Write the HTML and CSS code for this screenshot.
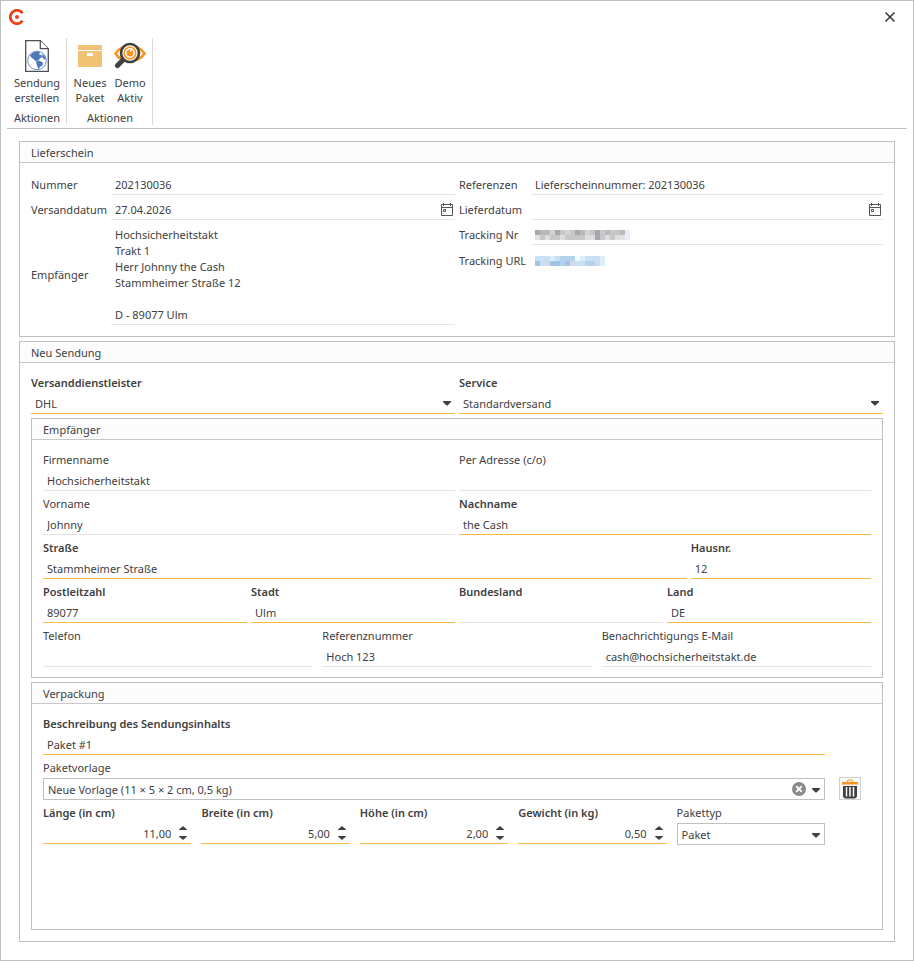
FILE: index.html
```html
<!DOCTYPE html>
<html lang="de">
<head>
<meta charset="utf-8">
<meta name="viewport" content="width=device-width, initial-scale=1">
<title>Sendung erstellen</title>
<link rel="stylesheet" href="styles.css">
</head>
<body>
<svg class="defs" aria-hidden="true">
  <symbol id="caret" viewBox="0 0 8 5"><path d="M0 0h8v1L4.500 4.500h-1L0 1z" fill="#404040"/></symbol>
  <symbol id="calendar" viewBox="0 0 12 13"><path d="M.5 1.500h11v11H.5zM.5 4.500h11M2.500 0v3M9.500 0v3M2.500 6.500h2v2h-2z" fill="none" stroke="#555"/></symbol>
  <symbol id="spin" viewBox="0 0 8 4"><path d="M4 0l4 3.500V4H0v-.5z" fill="#404040"/></symbol>
</svg>
<div class="window">
  <header class="titlebar">
    <svg class="logo" viewBox="0 0 16 16" role="img" aria-label="Logo">
      <path d="M13.500 4.200A6.700 6.700 0 1 0 13.500 11.800" fill="none" stroke="#e8431a" stroke-width="2.800"/>
      <circle cx="8" cy="8" r="2" fill="#e8431a"/>
    </svg>
    <button class="close" type="button" aria-label="Schließen">
      <svg viewBox="0 0 10 10"><path d="M.5.5l9 9M9.500.5l-9 9" stroke="#333" stroke-width="1.500"/></svg>
    </button>
  </header>

  <nav class="ribbon">
    <div class="group">
      <div class="tools">
        <button class="tool" type="button">
          <svg viewBox="0 0 32 32">
            <path d="M4.700.7h14.600l8 8v22.600H4.700z" fill="#fff" stroke="#505050" stroke-width="1.300"/>
            <path d="M19.300.7v8h8" fill="#fff" stroke="#505050" stroke-width="1.300"/>
            <circle cx="16" cy="20.500" r="9.300" fill="#fff" stroke="#6f8fc5"/>
            <path d="M9 15.500l3-3 5-1 2 1-1 2 2.500.5.500 2.500-2 .5-1 2-1.500.5-.5 1.500-2-1.500-1.500-1.500-1-.5-2-2z" fill="#4f78b8"/>
            <path d="M15 22l3-1.500 4 2-.5 3-2.500 1.500-1.500 2.500-1.500-4z" fill="#4f78b8"/>
            <path d="M21.500 14l2.500 3 .7 3-2.200-1-1.500-2.500z" fill="#4f78b8"/>
          </svg>
          <span>Sendung<br>erstellen</span>
        </button>
      </div>
      <div class="caption">Aktionen</div>
    </div>
    <div class="group">
      <div class="tools">
        <button class="tool" type="button">
          <svg viewBox="0 0 32 32"><path d="M4 5h24v5H4z" fill="#efc373"/><path d="M4 11h24v16H4zM13 13v3h6v-3z" fill="#efc373" fill-rule="evenodd"/></svg>
          <span>Neues<br>Paket</span>
        </button>
        <button class="tool" type="button">
          <svg viewBox="0 0 32 32">
            <path d="M1.500 13.500C8 3.500 24 3.500 30.500 13.500C24 23.500 8 23.500 1.500 13.500z" fill="#fff" stroke="#f7931e" stroke-width="2.600"/>
            <path d="M9.500 19.500L3.500 25.500" stroke="#404040" stroke-width="5" stroke-linecap="round"/>
            <circle cx="16" cy="13" r="9" fill="#fff" stroke="#404040" stroke-width="2.700"/>
            <circle cx="16" cy="13" r="5.800" fill="none" stroke="#f7931e" stroke-width="1.600"/>
            <circle cx="16" cy="13" r="3.400" fill="#f7931e"/>
            <path d="M16 11.500l1.500-1.500" stroke="#fff" stroke-width="1.300"/>
          </svg>
          <span>Demo<br>Aktiv</span>
        </button>
      </div>
      <div class="caption">Aktionen</div>
    </div>
  </nav>

  <main class="content">
    <section class="panel">
      <h2>Lieferschein</h2>
      <div class="body pair">
        <div class="sheet">
          <label for="nummer">Nummer</label>
          <div class="box"><input id="nummer" value="202130036"></div>
          <label for="versand">Versanddatum</label>
          <div class="box"><input id="versand" value="27.04.2026"><button class="pick" type="button" aria-label="Kalender öffnen"><svg><use href="#calendar"/></svg></button></div>
          <label for="adresse">Empfänger</label>
          <div class="box"><textarea id="adresse" rows="6">Hochsicherheitstakt
Trakt 1
Herr Johnny the Cash
Stammheimer Straße 12

D - 89077 Ulm</textarea></div>
        </div>
        <div class="sheet narrow">
          <label for="ref">Referenzen</label>
          <div class="box"><input id="ref" value="Lieferscheinnummer: 202130036"></div>
          <label for="lieferdatum">Lieferdatum</label>
          <div class="box"><input id="lieferdatum"><button class="pick" type="button" aria-label="Kalender öffnen"><svg><use href="#calendar"/></svg></button></div>
          <span>Tracking Nr</span>
          <div class="box">
            <svg class="mosaic" viewBox="0 0 19 2" width="95" height="10" shape-rendering="crispEdges" role="img" aria-label="Unkenntlich gemacht">
              <path d="M0 0h19v2H0z" fill="#c8c6c8"/>
              <path d="M0 0h1v1H0zM4 0h1v1H4zM8 0h1v1H8zM12 0h1v2h-1z" fill="#a9a7ab"/>
              <path d="M1 0h2v1H1zM9 0h1v1H9zM14 0h1v1h-1zM17 0h1v1h-1z" fill="#bab8ba"/>
              <path d="M2 1h1v1H2zM5 1h1v1H5zM10 1h2v1h-2zM14 1h1v1h-1zM16 1h1v1h-1z" fill="#dedde0"/>
              <path d="M3 0h1v1H3zM6 0h1v1H6zM10 0h1v1h-1z" fill="#d6d2d2"/>
              <path d="M0 1h1v1H0zM17 1h1v1h-1z" fill="#e2e2e2"/>
              <path d="M18 0h1v2h-1z" fill="#e9eff6"/>
            </svg>
          </div>
          <span>Tracking URL</span>
          <div class="box plain">
            <a href="#" aria-label="Sendungsverfolgung">
              <svg class="mosaic" viewBox="0 0 14 2" width="70" height="10" shape-rendering="crispEdges">
                <path d="M0 0h14v2H0z" fill="#c9dff2"/>
                <path d="M0 1h1v1H0zM3 1h2v1H3zM6 1h1v1H6z" fill="#a0c5e4"/>
                <path d="M5 0h3v1H5zM5 1h1v1H5zM10 1h2v1h-2z" fill="#b3d2ec"/>
                <path d="M3 0h1v1H3zM9 0h1v1H9zM13 0h1v2h-1z" fill="#d9effc"/>
                <path d="M2 1h1v1H2zM7 1h1v1H7zM12 1h1v1h-1z" fill="#d2d9ea"/>
                <path d="M8 0h1v1H8z" fill="#f8fbff"/>
              </svg>
            </a>
          </div>
        </div>
      </div>
    </section>

    <section class="panel grow">
      <h2>Neu Sendung</h2>
      <div class="body stack">
        <div class="row two">
          <div class="field must"><label for="dienst">Versanddienstleister</label><div class="line"><select id="dienst"><option>DHL</option></select><svg class="caret"><use href="#caret"/></svg></div></div>
          <div class="field must"><label for="service">Service</label><div class="line"><select id="service"><option>Standardversand</option></select><svg class="caret"><use href="#caret"/></svg></div></div>
        </div>

        <section class="panel">
          <h2>Empfänger</h2>
          <div class="body rows">
            <div class="row two">
              <div class="field"><label for="firma">Firmenname</label><div class="line"><input id="firma" value="Hochsicherheitstakt"></div></div>
              <div class="field"><label for="co">Per Adresse (c/o)</label><div class="line"><input id="co"></div></div>
            </div>
            <div class="row two">
              <div class="field"><label for="vorname">Vorname</label><div class="line"><input id="vorname" value="Johnny"></div></div>
              <div class="field must"><label for="nachname">Nachname</label><div class="line"><input id="nachname" value="the Cash"></div></div>
            </div>
            <div class="row street">
              <div class="field must"><label for="strasse">Straße</label><div class="line"><input id="strasse" value="Stammheimer Straße"></div></div>
              <div class="field must"><label for="hausnr">Hausnr.</label><div class="line"><input id="hausnr" value="12"></div></div>
            </div>
            <div class="row four">
              <div class="field must"><label for="plz">Postleitzahl</label><div class="line"><input id="plz" value="89077"></div></div>
              <div class="field must"><label for="stadt">Stadt</label><div class="line"><input id="stadt" value="Ulm"></div></div>
              <div class="field strong"><label for="bundesland">Bundesland</label><div class="line"><input id="bundesland"></div></div>
              <div class="field must"><label for="land">Land</label><div class="line"><input id="land" value="DE"></div></div>
            </div>
            <div class="row three">
              <div class="field"><label for="telefon">Telefon</label><div class="line"><input id="telefon"></div></div>
              <div class="field"><label for="refnr">Referenznummer</label><div class="line"><input id="refnr" value="Hoch 123"></div></div>
              <div class="field"><label for="mail">Benachrichtigungs E-Mail</label><div class="line"><input id="mail" value="cash@hochsicherheitstakt.de"></div></div>
            </div>
          </div>
        </section>

        <section class="panel grow">
          <h2>Verpackung</h2>
          <div class="body parcel">
            <div class="rows">
              <div class="field must"><label for="inhalt">Beschreibung des Sendungsinhalts</label><div class="line"><input id="inhalt" value="Paket #1"></div></div>
              <div class="field"><label for="vorlage">Paketvorlage</label>
                <div class="line framed"><select id="vorlage"><option>Neue Vorlage (11 × 5 × 2 cm, 0,5 kg)</option></select>
                  <button class="clear" type="button" aria-label="Vorlage leeren"><svg viewBox="0 0 14 14"><circle cx="7" cy="7" r="7" fill="#8a8a88"/><path d="M4.200 4.200l5.600 5.600M9.800 4.200L4.200 9.800" stroke="#fff" stroke-width="1.800"/></svg></button>
                  <svg class="caret"><use href="#caret"/></svg></div>
              </div>
              <div class="row five">
                <div class="field must"><label for="laenge">Länge (in cm)</label><div class="line number"><input id="laenge" value="11,00"><span class="spin"><button type="button" aria-label="Erhöhen"><svg><use href="#spin"/></svg></button><button type="button" aria-label="Verringern"><svg class="down"><use href="#spin"/></svg></button></span></div></div>
                <div class="field must"><label for="breite">Breite (in cm)</label><div class="line number"><input id="breite" value="5,00"><span class="spin"><button type="button" aria-label="Erhöhen"><svg><use href="#spin"/></svg></button><button type="button" aria-label="Verringern"><svg class="down"><use href="#spin"/></svg></button></span></div></div>
                <div class="field must"><label for="hoehe">Höhe (in cm)</label><div class="line number"><input id="hoehe" value="2,00"><span class="spin"><button type="button" aria-label="Erhöhen"><svg><use href="#spin"/></svg></button><button type="button" aria-label="Verringern"><svg class="down"><use href="#spin"/></svg></button></span></div></div>
                <div class="field must"><label for="gewicht">Gewicht (in kg)</label><div class="line number"><input id="gewicht" value="0,50"><span class="spin"><button type="button" aria-label="Erhöhen"><svg><use href="#spin"/></svg></button><button type="button" aria-label="Verringern"><svg class="down"><use href="#spin"/></svg></button></span></div></div>
                <div class="field"><label for="typ">Pakettyp</label><div class="line framed"><select id="typ"><option>Paket</option></select><svg class="caret"><use href="#caret"/></svg></div></div>
              </div>
            </div>
            <button class="trash" type="button" aria-label="Paket löschen">
              <svg viewBox="0 0 16 20">
                <path d="M5.500 3V2a1 1 0 0 1 1-1h3a1 1 0 0 1 1 1v1" fill="none" stroke="#f7931e"/>
                <path d="M0 3h16v2.500H0z" fill="#f7931e"/>
                <path d="M1 7h14v9.500a3 3 0 0 1-3 3H4a3 3 0 0 1-3-3z" fill="#404040"/>
                <path d="M4.500 8v9.500M8 8v9.500M11.500 8v9.500" stroke="#fff" stroke-width="1.500"/>
              </svg>
            </button>
          </div>
        </section>
      </div>
    </section>
  </main>
</div>
</body>
</html>
```
FILE: styles.css
```css
* { box-sizing: border-box; }

body {
  margin: 0;
  color: #404040;
  background: #fff;
  font: 11px/16px "Segoe UI", "Noto Sans", "Open Sans", sans-serif;
}

input, select, textarea, button {
  margin: 0;
  padding: 0;
  border: 0;
  border-radius: 0;
  background: none;
  color: inherit;
  font: inherit;
  outline-offset: -1px;
}

svg { display: block; }
.defs { position: absolute; width: 0; height: 0; }

.window {
  display: flex;
  flex-direction: column;
  min-height: 100vh;
  border: 1px solid #c0c0c0;
}

.titlebar {
  display: flex;
  justify-content: space-between;
  align-items: center;
  height: 32px;
  padding: 0 18px 0 8px;
}
.logo { width: 16px; height: 16px; }
.close svg { width: 10px; height: 10px; }

.ribbon {
  display: flex;
  margin: 0 6px;
  padding: 5px 0 3px;
  border-bottom: 1px solid #c0c0c0;
}
.group {
  height: 87px;
  padding: 0 2px 0 3px;
  border-right: 1px solid #dadada;
  text-align: center;
}
.group:first-child { min-width: 60px; padding: 0 0 0 1px; }
.tools { display: flex; justify-content: center; }
.tool {
  display: flex;
  flex-direction: column;
  align-items: center;
  min-width: 40px;
  padding-top: 2px;
  gap: 3px;
}
.tool span { line-height: 15px; }
.tool svg { width: 32px; height: 32px; }
.caption { padding-top: 5px; }

.content {
  display: flex;
  flex: 1;
  flex-direction: column;
  gap: 4px;
  padding: 12px 18px 18px;
}

.panel {
  display: flex;
  flex-direction: column;
  border: 1px solid #c0c0c0;
}
.panel h2 {
  margin: 0;
  padding: 3px 11px 1px;
  border-bottom: 1px solid #c8c8c8;
  background: #fcfcfc;
  font-size: 11px;
  font-weight: 400;
}
.grow, .grow > .body { flex: 1; }
.body { padding: 12px 11px 10px; }
.body.pair, .body.stack { padding-bottom: 11px; }
.stack { display: flex; flex-direction: column; gap: 4px; }
.rows { display: flex; flex-direction: column; gap: 5px; }

.pair, .two { display: grid; grid-template-columns: 1fr 1fr; gap: 4px; }
.street { display: grid; grid-template-columns: 25fr 7fr; gap: 4px; }
.four { display: grid; grid-template-columns: repeat(4, 1fr); gap: 4px; }
.three { display: grid; grid-template-columns: repeat(3, 1fr); gap: 10px; }
.five { display: grid; grid-template-columns: repeat(5, 1fr); gap: 10px; }

.sheet {
  display: grid;
  grid-template-columns: 80px 1fr;
  align-content: start;
  align-items: center;
  row-gap: 5px;
}
.sheet.narrow { grid-template-columns: 72px 1fr; }
.sheet > label, .sheet > span { white-space: nowrap; }
.box {
  display: flex;
  align-items: center;
  min-height: 20px;
  padding: 0 2px 0 4px;
  border-bottom: 1px solid #e4e4e4;
}
.box.plain { border: 0; min-height: 22px; }
.box input { flex: 1; min-width: 0; height: 19px; }
.box textarea {
  flex: 1;
  min-width: 0;
  height: 99px;
  padding: 2px 0 1px;
  overflow: hidden;
  resize: none;
}
.pick svg { width: 12px; height: 13px; }

.field { min-width: 0; }
.field > label { display: block; white-space: nowrap; }
.must > label, .strong > label { font-weight: 600; }
.line {
  position: relative;
  display: flex;
  align-items: center;
  height: 23px;
  border-bottom: 1px solid #e4e4e4;
}
.must .line { border-color: #f9b93f; }
.line input, .line select {
  flex: 1;
  width: 100%;
  min-width: 0;
  height: 100%;
  padding: 2px 4px 0;
}
.line select { appearance: none; padding: 3px 24px 0 4px; }
.line.framed {
  height: 22px;
  margin-top: 2px;
  border: 1px solid #c0c0c0;
}
.line.framed select { padding-top: 2px; }
.caret {
  position: absolute;
  top: 10px;
  right: 4px;
  width: 8px;
  height: 5px;
  pointer-events: none;
}
.framed .caret { top: 9px; }
.clear { position: absolute; right: 18px; }
.clear svg { width: 14px; height: 14px; }

.line.number input { padding-right: 8px; text-align: right; }
.spin { display: flex; flex-direction: column; gap: 6px; padding: 2px 4px 0 0; }
.spin button { height: 4px; }
.spin svg { width: 8px; height: 4px; }
.spin .down { transform: rotate(180deg); }

.parcel {
  display: grid;
  grid-template-columns: 1fr 22px;
  column-gap: 14px;
  align-content: start;
  align-items: start;
  padding-right: 21px;
}
.trash {
  display: flex;
  justify-content: center;
  align-items: center;
  height: 23px;
  margin-top: 61px;
  border: 1px solid #d0d0d0;
  background: #fafafa;
}
.trash svg { width: 16px; height: 20px; }
```
